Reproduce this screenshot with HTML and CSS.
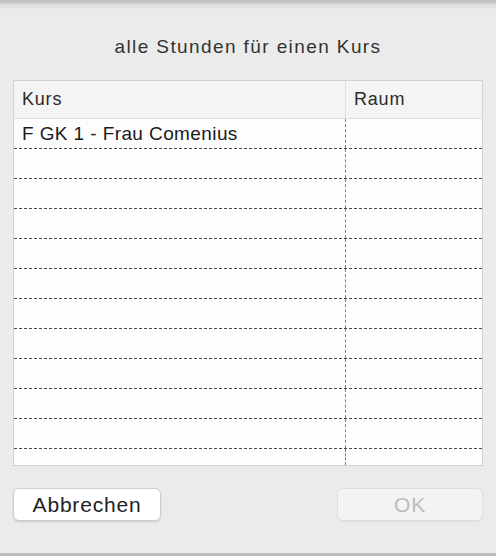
FILE: index.html
```html
<!DOCTYPE html>
<html lang="de">
<head>
    <meta charset="UTF-8">
    <meta name="viewport" content="width=device-width, initial-scale=1.0">
    <title>alle Stunden für einen Kurs</title>
    <link rel="stylesheet" href="styles.css">
</head>
<body>
    <div class="topBar"></div>

    <div class="dialog">
        <h1 class="title">alle Stunden für einen Kurs</h1>

        <!-- Kursliste -->
        <div class="listBox">
            <div class="row headRow">
                <div class="cell">Kurs</div>
                <div class="cell">Raum</div>
            </div>
            <div class="row"><div class="cell">F GK 1 - Frau Comenius</div><div class="cell"></div></div>
            <div class="row"><div class="cell"></div><div class="cell"></div></div>
            <div class="row"><div class="cell"></div><div class="cell"></div></div>
            <div class="row"><div class="cell"></div><div class="cell"></div></div>
            <div class="row"><div class="cell"></div><div class="cell"></div></div>
            <div class="row"><div class="cell"></div><div class="cell"></div></div>
            <div class="row"><div class="cell"></div><div class="cell"></div></div>
            <div class="row"><div class="cell"></div><div class="cell"></div></div>
            <div class="row"><div class="cell"></div><div class="cell"></div></div>
            <div class="row"><div class="cell"></div><div class="cell"></div></div>
            <div class="row"><div class="cell"></div><div class="cell"></div></div>
            <div class="row fillRow"><div class="cell"></div><div class="cell"></div></div>
        </div>

        <div class="buttons">
            <button class="btn">Abbrechen</button>
            <button class="btn okButton" disabled>OK</button>
        </div>
    </div>

    <div class="bottomBar"></div>
</body>
</html>
```

FILE: styles.css
```css
body {
    font-family: "Liberation Sans", Arial, sans-serif;
    margin: 0;
    padding: 0;
    width: 496px;
    height: 556px;
    background-color: #ebebeb;
    display: flex;
    flex-direction: column;
    overflow: hidden;
}

.topBar {
    height: 9px;
    background: linear-gradient(#bdbdbd 0, #c9c9c9 3px, #dedede 4px, #e4e4e4 8px, #ebebeb 9px);
}

.dialog {
    flex: 1;
    display: flex;
    flex-direction: column;
    padding: 0 13px;
}

.title {
    margin: 26px 0 21px;
    font-size: 19px;
    font-weight: normal;
    line-height: 24px;
    letter-spacing: 1.4px;
    text-align: center;
    color: #333;
}

/* Liste mit Kurs / Raum */
.listBox {
    height: 384px;
    border: 1px solid #d2d2d2;
    background-color: #fdfdfd;
    display: flex;
    flex-direction: column;
    overflow: hidden;
}

.row {
    display: grid;
    grid-template-columns: 331px 1fr;
    height: 29px;
    border-bottom: 1px dashed #484848;
}

.row .cell {
    padding-left: 8px;
    font-size: 19px;
    line-height: 29px;
    letter-spacing: 0.4px;
    color: #1a1a1a;
    white-space: nowrap;
}

.row .cell + .cell {
    border-left: 1px dashed #808080;
}

.headRow {
    height: 37px;
    background-color: #f4f4f4;
    border-bottom: 1px solid #dcdcdc;
}

.headRow .cell {
    font-size: 18px;
    line-height: 37px;
    letter-spacing: 0.8px;
    color: #2b2b2b;
}

.headRow .cell + .cell {
    border-left: 1px solid #e0e0e0;
}

.fillRow {
    flex: 1;
    border-bottom: none;
}

.buttons {
    display: flex;
    justify-content: space-between;
    margin-top: 22px;
}

.btn {
    width: 148px;
    height: 33px;
    font-family: "Liberation Sans", Arial, sans-serif;
    font-size: 21px;
    letter-spacing: 0.8px;
    color: #222;
    background-color: #ffffff;
    border: 1px solid #cfcfcf;
    border-radius: 6px;
    box-shadow: 0 1px 2px rgba(0, 0, 0, 0.15);
    padding: 0;
}

.okButton {
    width: 146px;
    color: #bcbcbc;
    background-color: #f3f3f3;
    border-color: #dedede;
    box-shadow: 0 1px 1px rgba(0, 0, 0, 0.06);
}

.bottomBar {
    height: 3px;
    background-color: #bdbdbd;
}
```
